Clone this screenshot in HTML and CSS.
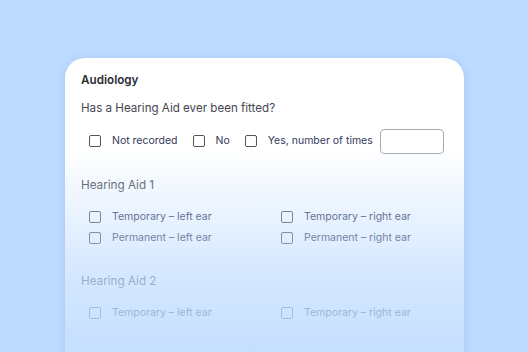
FILE: index.html
```html
<!DOCTYPE html>
<html lang="en">
<head>
  <meta charset="UTF-8">
  <meta name="viewport" content="width=device-width, initial-scale=1.0">
  <title>Audiology</title>
  <link rel="stylesheet" href="styles.css">
</head>
<body>

  <!-- Audiology card -->
  <div class="card">
    <h2 class="card-title">Audiology</h2>
    <p class="question">Has a Hearing Aid ever been fitted?</p>

    <div class="options">
      <label class="option"><span class="box"></span>Not recorded</label>
      <label class="option"><span class="box"></span>No</label>
      <label class="option"><span class="box"></span>Yes, number of times</label>
      <input class="times" type="text">
    </div>

    <h3 class="aid-title first">Hearing Aid 1</h3>
    <div class="aid-grid">
      <label class="option"><span class="box"></span>Temporary – left ear</label>
      <label class="option"><span class="box"></span>Temporary – right ear</label>
      <label class="option"><span class="box"></span>Permanent – left ear</label>
      <label class="option"><span class="box"></span>Permanent – right ear</label>
    </div>

    <h3 class="aid-title">Hearing Aid 2</h3>
    <div class="aid-grid">
      <label class="option"><span class="box"></span>Temporary – left ear</label>
      <label class="option"><span class="box"></span>Temporary – right ear</label>
    </div>
  </div>

</body>
</html>
```

FILE: styles.css
```css
body {
  font-family: Inter, "Noto Sans", sans-serif;
  margin: 0;
  padding: 0;
  background-color: #bddaff;
  height: 352px;
  overflow: hidden;
}

.card {
  position: relative;
  margin: 58px 0 0 65px;
  width: 399px;
  height: 294px;
  box-sizing: border-box;
  padding: 14px 16px;
  background-color: #fff;
  border-radius: 20px 20px 0 0;
  box-shadow: 0 2px 10px rgba(60, 100, 170, 0.18);
}

/* fade the card into the background */
.card::after {
  content: "";
  position: absolute;
  left: 0;
  right: 0;
  top: 0;
  bottom: 0;
  border-radius: 20px 20px 0 0;
  background: linear-gradient(to bottom,
    rgba(189, 218, 255, 0) 0px,
    rgba(189, 218, 255, 0) 90px,
    rgba(189, 218, 255, 0.35) 160px,
    rgba(189, 218, 255, 0.65) 220px,
    rgba(189, 218, 255, 0.88) 294px);
  pointer-events: none;
}

.card-title {
  margin: 0;
  font-size: 11.7px;
  line-height: 16px;
  font-weight: 600;
  color: #2a2b33;
}

.question {
  margin: 12px 0 0;
  font-size: 11.6px;
  line-height: 16px;
  color: #45464f;
}

.options {
  display: flex;
  align-items: center;
  height: 26px;
  margin-top: 12px;
  padding-left: 8px;
  gap: 15px;
  white-space: nowrap;
}

.option {
  display: flex;
  align-items: center;
  gap: 11px;
  font-size: 10.5px;
  line-height: 16px;
  color: #34385c;
  white-space: nowrap;
}

.box {
  width: 10px;
  height: 10px;
  border: 1.5px solid #55565c;
  border-radius: 2px;
  flex: none;
}

.times {
  width: 64px;
  height: 25px;
  box-sizing: border-box;
  margin-left: -8px;
  border: 1px solid #a9abb3;
  border-radius: 4px;
  background: #fff;
}

.aid-title {
  margin: 27px 0 0;
  font-size: 11.7px;
  line-height: 16px;
  font-weight: 400;
  color: #55565f;
}

.aid-title.first {
  margin-top: 23px;
}

.aid-grid {
  display: grid;
  grid-template-columns: 192px 192px;
  row-gap: 5px;
  margin-top: 16px;
  padding-left: 8px;
}
```
